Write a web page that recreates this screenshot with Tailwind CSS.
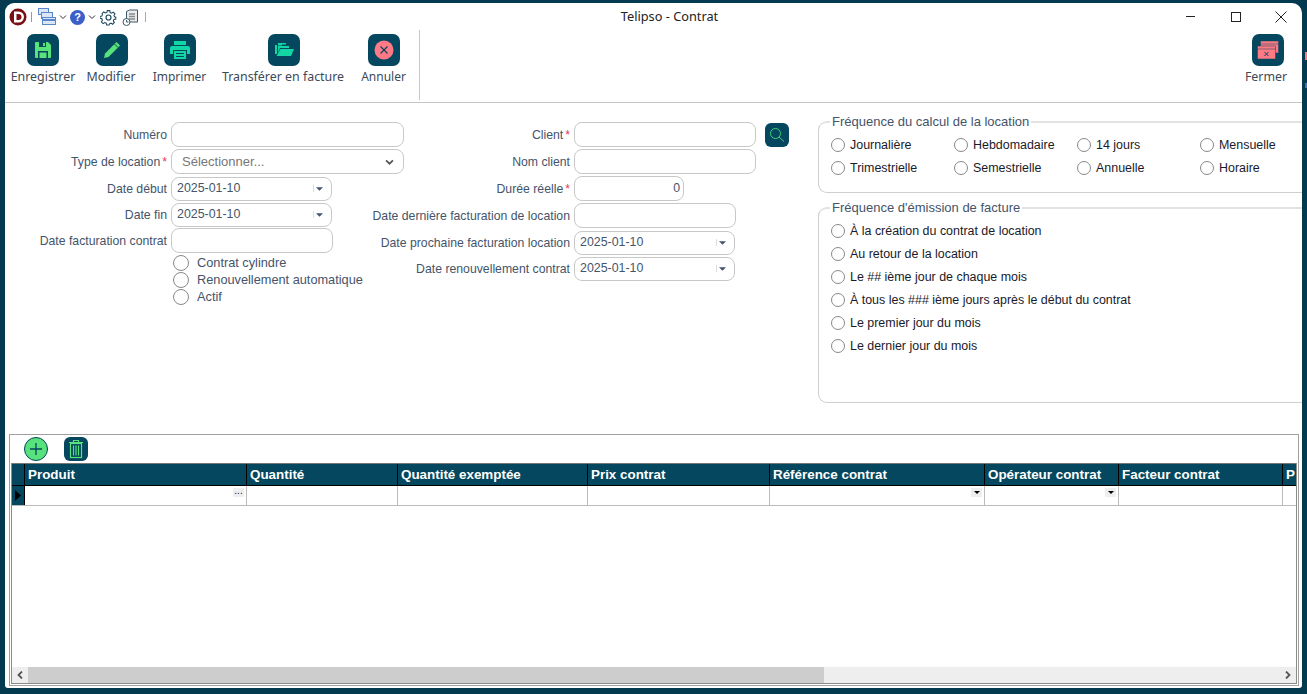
<!DOCTYPE html>
<html lang="fr">
<head>
  <meta charset="UTF-8" />
  <title>Telipso - Contrat</title>
  <script src="https://cdn.jsdelivr.net/npm/@tailwindcss/browser@4"></script>
</head>
<body class="bg-[#043a50] h-[694px] w-[1307px] overflow-hidden relative font-['Liberation_Sans',Arial,sans-serif] text-[12.25px] text-[#44546a]">
  <!-- window behind, just visible at the right edge -->
  <span class="absolute left-[1305px] top-[52px] w-[2px] h-[8px] bg-[#ff7a85]"></span>
  <span class="absolute left-[1305px] top-[83px] w-[2px] h-[5px] bg-[#4a6fb0]"></span>

  <div class="ml-[5px] mt-[3px] w-[1297px] h-[685px] bg-white rounded-tl-[9px] rounded-tr-[10px] rounded-bl-[3px] rounded-br-[3px] flex flex-col overflow-hidden">

    <!-- title bar -->
    <div class="h-[27px] shrink-0 flex items-center relative font-['Noto_Sans',sans-serif]">
      <div class="flex items-center ml-[4px] mt-[1px]">
        <svg class="w-[18px] h-[18px]" viewBox="0 0 18 18"><circle cx="9" cy="9" r="8.500" fill="#7a0f14"/><path d="M5 3.500h4.500a5.500 5.500 0 0 1 0 11H5z" fill="#fff"/><path d="M7.500 6h2a3 3 0 0 1 0 6h-2z" fill="#7a0f14"/></svg>
        <span class="w-px h-[10px] bg-[#999] ml-[4px]"></span>
        <svg class="w-[18px] h-[18px] ml-[6px]" viewBox="0 0 18 18" fill="#dbe6f7" stroke="#5a86cc"><rect x=".5" y=".5" width="10" height="6"/><rect x="3.500" y="4.500" width="11" height="6"/><rect x="4.500" y="9.500" width="13" height="7"/><path d="M4.500 12h13" stroke-width="2"/></svg>
        <svg class="w-[8px] h-[8px] ml-[3px]" viewBox="0 0 8 8" fill="none" stroke="#333"><path d="M1 2.500l3 3 3-3"/></svg>
        <span class="w-[15px] h-[15px] rounded-full bg-[#3a5fc8] ml-[3px] flex items-center justify-center text-white text-[11px] font-bold leading-none font-['Liberation_Sans',sans-serif]">?</span>
        <svg class="w-[8px] h-[8px] ml-[3px]" viewBox="0 0 8 8" fill="none" stroke="#333"><path d="M1 2.500l3 3 3-3"/></svg>
        <svg class="w-[17px] h-[17px] ml-[4px]" viewBox="0 0 24 24" fill="none" stroke="#1f4a5e" stroke-width="1.700"><circle cx="12" cy="12" r="3.500"/><path d="M10 2h4l.6 3 2.400 1 2.600-1.700 2.800 2.800L20.700 9.700l1 2.300 2 .4v3l-3 .6-1 2.400 1.700 2.600-2.800 2.800-2.600-1.700-2.400 1-.6 2h-4l-.6-3-2.400-1-2.600 1.700-2.800-2.800 1.700-2.600-1-2.400-3-.6v-3l3-.6 1-2.400L1.600 6.900l2.800-2.800L7 5.800l2.400-1z" transform="translate(12 12) scale(.88) translate(-12 -13)"/></svg>
        <svg class="w-[17px] h-[17px] ml-[5px]" viewBox="0 0 17 17" fill="#e8ecef" stroke="#3f5866"><path d="M4.500 2.500l3-1.500h8v12h-11z"/><path d="M7 5h6M7 7.500h6M7 10h6" stroke="#888" stroke-width="1.500"/><circle cx="4.500" cy="13" r="3.500" fill="#fff"/><path d="M4.500 11v2h2"/></svg>
        <span class="w-px h-[10px] bg-[#aaa] ml-[6px]"></span>
      </div>
      <div class="absolute left-[16px] w-[1297px] text-center text-[12.75px] text-[#222] pointer-events-none">Telipso - Contrat</div>
      <div class="ml-auto -mr-[1px] flex items-center text-[#222]">
        <span class="w-[45px] flex justify-center"><span class="w-[9px] h-px bg-[#222]"></span></span>
        <span class="w-[45px] flex justify-center"><span class="w-[10px] h-[10px] border border-[#222]"></span></span>
        <span class="w-[45px] flex justify-center"><svg class="w-[12px] h-[12px]" viewBox="0 0 12 12" stroke="#222"><path d="M.5.500l11 11M11.500.500l-11 11"/></svg></span>
      </div>
    </div>

    <!-- toolbar -->
    <div class="h-[73px] shrink-0 border-b border-[#c4c4c4] flex font-['Noto_Sans',sans-serif] text-[12.4px] text-[#3d4a58]">
      <div class="flex items-start pt-[4px] border-r border-[#c8c8c8] h-[70px] w-[415px]">
        <div class="w-[76px] flex flex-col items-center">
          <span class="w-[32px] h-[32px] rounded-[7px] bg-[#04475e] flex items-center justify-center">
            <svg class="w-[20px] h-[20px]" viewBox="0 0 20 20"><path d="M2 3a1 1 0 0 1 1-1h12l3 3v12a1 1 0 0 1-1 1H3a1 1 0 0 1-1-1z" fill="#57e27b"/><rect x="6" y="2" width="7" height="5" fill="#04475e"/><rect x="10" y="3" width="2" height="3" fill="#57e27b"/><rect x="5" y="11" width="10" height="7" fill="#04475e"/><rect x="6.500" y="12.500" width="7" height="5.500" fill="#57e27b"/></svg>
          </span>
          <span class="mt-[2px] leading-[17px]">Enregistrer</span>
        </div>
        <div class="w-[62px] flex flex-col items-center">
          <span class="w-[32px] h-[32px] rounded-[7px] bg-[#04475e] flex items-center justify-center">
            <svg class="w-[20px] h-[20px]" viewBox="0 0 20 20"><path d="M14.500 2l3.500 3.500L6.500 17 2 18l1-4.500z" fill="#57e27b"/><path d="M12.500 4l3.500 3.500" stroke="#04475e"/></svg>
          </span>
          <span class="mt-[2px] leading-[17px] -ml-[2px]">Modifier</span>
        </div>
        <div class="w-[74px] flex flex-col items-center">
          <span class="w-[32px] h-[32px] rounded-[7px] bg-[#04475e] flex items-center justify-center">
            <svg class="w-[22px] h-[22px]" viewBox="0 0 22 22" fill="#12d6a4"><rect x="5" y="2" width="12" height="4"/><path d="M1 9a2 2 0 0 1 2-2h16a2 2 0 0 1 2 2v6h-3v-4H4v4H1z"/><path d="M5 12h12v8H5z"/><path d="M7 14.500h8M7 17.500h8" stroke="#04475e"/></svg>
          </span>
          <span class="mt-[2px] leading-[17px] text-[12px] -ml-[1px]">Imprimer</span>
        </div>
        <div class="w-[134px] flex flex-col items-center">
          <span class="w-[32px] h-[32px] rounded-[7px] bg-[#04475e] flex items-center justify-center">
            <svg class="w-[20px] h-[20px]" viewBox="0 0 20 20" fill="#12d6a4"><path d="M1 5h2v9H1z"/><path d="M4 3h8v1.500H8v1H4z"/><path d="M4 6h11v2H6L4 13z"/><path d="M6.500 9H20l-3 7H2.500z"/></svg>
          </span>
          <span class="mt-[2px] leading-[17px] whitespace-nowrap -ml-[2px]">Transférer en facture</span>
        </div>
        <div class="w-[66px] flex flex-col items-center">
          <span class="w-[32px] h-[32px] rounded-[7px] bg-[#04475e] flex items-center justify-center">
            <svg class="w-[20px] h-[20px]" viewBox="0 0 20 20"><circle cx="10" cy="10" r="9.500" fill="#ff7a85"/><path d="M6.500 6.500l7 7M13.500 6.500l-7 7" stroke="#04475e" stroke-width="1.200"/></svg>
          </span>
          <span class="mt-[2px] leading-[17px] text-[12px] -ml-[1px]">Annuler</span>
        </div>
      </div>
      <div class="ml-auto mr-[16px] pt-[4px] w-[40px] flex flex-col items-center">
        <span class="ml-[4px] w-[32px] h-[32px] rounded-[7px] bg-[#04475e] flex items-center justify-center">
          <svg class="w-[22px] h-[20px]" viewBox="0 0 22 20" fill="#ff7a85" stroke="#04475e" stroke-width=".5"><rect x="3.500" y="1" width="18" height="12" /><rect x="0.500" y="6" width="18" height="13"/><path d="M.5 9h18M3.500 4h18" /><path d="M7.500 12l4 4M11.500 12l-4 4" stroke-width="1"/></svg>
        </span>
        <span class="mt-[2px] leading-[17px]">Fermer</span>
      </div>
    </div>

    <!-- form -->
    <div class="h-[331px] shrink-0 relative flex pt-[19px]">
      <!-- left column -->
      <div class="w-[399px] shrink-0 flex flex-col gap-[2px]">
        <div class="flex items-center h-[25px]"><label class="w-[162px] pt-[1px] flex justify-end whitespace-nowrap">Numéro</label><input class="ml-[4px] w-[233px] h-[25px] border border-[#c8c8c8] rounded-[8px]" /></div>
        <div class="flex items-center h-[25px]"><label class="w-[162px] pt-[1px] flex justify-end whitespace-nowrap">Type de location<span class="text-[#e0405a] ml-[2px]">*</span></label>
          <div class="ml-[4px] w-[233px] h-[25px] border border-[#c8c8c8] rounded-[8px] flex items-center justify-between pl-[10px] pr-[9px] text-[13px] text-[#777]">Sélectionner...
            <svg class="w-[9px] h-[6px]" viewBox="0 0 10 7" fill="none" stroke="#555" stroke-width="2"><path d="M1 1.500l4 4 4-4"/></svg></div></div>
        <div class="flex items-center h-[25px] -mb-[1px]"><label class="w-[162px] pt-[1px] flex justify-end whitespace-nowrap">Date début</label>
          <div class="ml-[4px] w-[161px] h-[24px] border border-[#c8c8c8] rounded-[8px] flex items-center justify-between pl-[5px] pr-[8px] text-[12.4px]"><span>2025-01-10</span><span class="flex items-center gap-[2px]"><span class="w-px h-[7px] bg-[#ddd]"></span><svg class="w-[7px] h-[4px]" viewBox="0 0 8 4" fill="#44546a"><path d="M0 0h8L4 4z"/></svg></span></div></div>
        <div class="flex items-center h-[25px] -mb-[1px]"><label class="w-[162px] pt-[1px] flex justify-end whitespace-nowrap">Date fin</label>
          <div class="ml-[4px] w-[161px] h-[24px] border border-[#c8c8c8] rounded-[8px] flex items-center justify-between pl-[5px] pr-[8px] text-[12.4px]"><span>2025-01-10</span><span class="flex items-center gap-[2px]"><span class="w-px h-[7px] bg-[#ddd]"></span><svg class="w-[7px] h-[4px]" viewBox="0 0 8 4" fill="#44546a"><path d="M0 0h8L4 4z"/></svg></span></div></div>
        <div class="flex items-center h-[25px]"><label class="w-[162px] pt-[1px] flex justify-end whitespace-nowrap">Date facturation contrat</label><input class="ml-[4px] w-[162px] h-[25px] border border-[#c8c8c8] rounded-[8px]" /></div>
        <div class="ml-[168px] -mt-[1px] flex flex-col text-[12.75px]">
          <div class="flex items-center h-[17px] gap-[8px] whitespace-nowrap"><span class="w-[16px] h-[16px] rounded-full border border-[#888]"></span>Contrat cylindre</div>
          <div class="flex items-center h-[17px] gap-[8px] whitespace-nowrap"><span class="w-[16px] h-[16px] rounded-full border border-[#888]"></span>Renouvellement automatique</div>
          <div class="flex items-center h-[17px] gap-[8px] whitespace-nowrap"><span class="w-[16px] h-[16px] rounded-full border border-[#888]"></span>Actif</div>
        </div>
      </div>

      <!-- middle column -->
      <div class="w-[414px] shrink-0 flex flex-col gap-[2px]">
        <div class="flex items-center h-[25px]"><label class="w-[166px] pt-[1px] flex justify-end whitespace-nowrap">Client<span class="text-[#e0405a] ml-[2px]">*</span></label><input class="ml-[4px] w-[182px] h-[25px] border border-[#c8c8c8] rounded-[8px]" />
          <span class="ml-[9px] w-[24px] h-[24px] rounded-[6px] bg-[#04475e] flex items-center justify-center"><svg class="w-[16px] h-[16px]" viewBox="0 0 16 16" fill="none" stroke="#3ecf7a"><circle cx="6.500" cy="6.500" r="5"/><path d="M10 10l5 4.500"/></svg></span></div>
        <div class="flex items-center h-[25px]"><label class="w-[166px] pt-[1px] flex justify-end whitespace-nowrap">Nom client</label><input class="ml-[4px] w-[182px] h-[25px] border border-[#c8c8c8] rounded-[8px]" /></div>
        <div class="flex items-center h-[25px]"><label class="w-[166px] pt-[1px] flex justify-end whitespace-nowrap">Durée réelle<span class="text-[#e0405a] ml-[2px]">*</span></label><input value="0" class="ml-[4px] w-[110px] h-[25px] border border-[#c8c8c8] rounded-[8px] text-right pr-[3px] pb-[2px]" /></div>
        <div class="flex items-center h-[25px]"><label class="w-[166px] pt-[1px] flex justify-end whitespace-nowrap">Date dernière facturation de location</label><input class="ml-[4px] w-[162px] h-[25px] border border-[#c8c8c8] rounded-[8px]" /></div>
        <div class="flex items-center h-[25px] -mb-[1px]"><label class="w-[166px] pt-[1px] flex justify-end whitespace-nowrap">Date prochaine facturation location</label>
          <div class="ml-[4px] w-[161px] h-[24px] border border-[#c8c8c8] rounded-[8px] flex items-center justify-between pl-[5px] pr-[8px] text-[12.4px]"><span>2025-01-10</span><span class="flex items-center gap-[2px]"><span class="w-px h-[7px] bg-[#ddd]"></span><svg class="w-[7px] h-[4px]" viewBox="0 0 8 4" fill="#44546a"><path d="M0 0h8L4 4z"/></svg></span></div></div>
        <div class="flex items-center h-[25px]"><label class="w-[166px] pt-[1px] flex justify-end whitespace-nowrap">Date renouvellement contrat</label>
          <div class="ml-[4px] w-[161px] h-[24px] border border-[#c8c8c8] rounded-[8px] flex items-center justify-between pl-[5px] pr-[8px] text-[12.4px]"><span>2025-01-10</span><span class="flex items-center gap-[2px]"><span class="w-px h-[7px] bg-[#ddd]"></span><svg class="w-[7px] h-[4px]" viewBox="0 0 8 4" fill="#44546a"><path d="M0 0h8L4 4z"/></svg></span></div></div>
      </div>

      <!-- right column -->
      <div class="w-[510px] shrink-0 -mt-[7px]">
        <fieldset class="h-[78px] border border-[#cfcfcf] border-t-2 border-t-[#e2e2e2] rounded-[9px] pl-[12px]">
          <legend class="px-[2px] -ml-[1px] text-[13px] leading-[14px]">Fréquence du calcul de la location</legend>
          <div class="grid grid-cols-[123px_123px_123px_123px] gap-y-[9px] text-[12.45px] text-[#1a1a2a] mt-[9px]">
            <div class="flex items-center h-[14px] gap-[5px]"><span class="w-[14px] h-[14px] rounded-full border border-[#888]"></span>Journalière</div>
            <div class="flex items-center h-[14px] gap-[5px]"><span class="w-[14px] h-[14px] rounded-full border border-[#888]"></span>Hebdomadaire</div>
            <div class="flex items-center h-[14px] gap-[5px]"><span class="w-[14px] h-[14px] rounded-full border border-[#888]"></span>14 jours</div>
            <div class="flex items-center h-[14px] gap-[5px]"><span class="w-[14px] h-[14px] rounded-full border border-[#888]"></span>Mensuelle</div>
            <div class="flex items-center h-[14px] gap-[5px]"><span class="w-[14px] h-[14px] rounded-full border border-[#888]"></span>Trimestrielle</div>
            <div class="flex items-center h-[14px] gap-[5px]"><span class="w-[14px] h-[14px] rounded-full border border-[#888]"></span>Semestrielle</div>
            <div class="flex items-center h-[14px] gap-[5px]"><span class="w-[14px] h-[14px] rounded-full border border-[#888]"></span>Annuelle</div>
            <div class="flex items-center h-[14px] gap-[5px]"><span class="w-[14px] h-[14px] rounded-full border border-[#888]"></span>Horaire</div>
          </div>
        </fieldset>
        <fieldset class="mt-[8px] h-[202px] border border-[#cfcfcf] border-t-2 border-t-[#e2e2e2] rounded-[9px] pl-[12px]">
          <legend class="px-[2px] -ml-[1px] text-[13px] leading-[14px]">Fréquence d'émission de facture</legend>
          <div class="flex flex-col gap-[9px] text-[12.45px] text-[#1a1a2a] mt-[9px]">
            <div class="flex items-center h-[14px] gap-[5px]"><span class="w-[14px] h-[14px] rounded-full border border-[#888]"></span>À la création du contrat de location</div>
            <div class="flex items-center h-[14px] gap-[5px]"><span class="w-[14px] h-[14px] rounded-full border border-[#888]"></span>Au retour de la location</div>
            <div class="flex items-center h-[14px] gap-[5px]"><span class="w-[14px] h-[14px] rounded-full border border-[#888]"></span>Le ## ième jour de chaque mois</div>
            <div class="flex items-center h-[14px] gap-[5px]"><span class="w-[14px] h-[14px] rounded-full border border-[#888]"></span>À tous les ### ième jours après le début du contrat</div>
            <div class="flex items-center h-[14px] gap-[5px]"><span class="w-[14px] h-[14px] rounded-full border border-[#888]"></span>Le premier jour du mois</div>
            <div class="flex items-center h-[14px] gap-[5px]"><span class="w-[14px] h-[14px] rounded-full border border-[#888]"></span>Le dernier jour du mois</div>
          </div>
        </fieldset>
      </div>
    </div>

    <!-- grid panel -->
    <div class="ml-[4px] w-[1290px] h-[252px] border border-[#a0a0a0] pb-[1px] flex flex-col">
      <div class="h-[28px] shrink-0 flex items-center pl-[14px] gap-[16px]">
        <span class="w-[24px] h-[24px] rounded-full bg-[#57e27b] border border-[#04475e] flex items-center justify-center"><svg class="w-[12px] h-[12px]" viewBox="0 0 12 12" stroke="#04475e" stroke-width="1.300"><path d="M6 0v12M0 6h12"/></svg></span>
        <span class="w-[24px] h-[24px] rounded-[6px] bg-[#04475e] flex items-center justify-center"><svg class="w-[16px] h-[20px]" viewBox="0 0 16 20" fill="none" stroke="#57e27b" stroke-width="1.200"><path d="M1 3.500h14M5.500 3.500v-2h5v2"/><rect x="2.500" y="4.500" width="11" height="14"/><path d="M5.500 6.500v10M8 6.500v10M10.500 6.500v10"/></svg></span>
      </div>
      <div class="mx-[1px] flex-1 border-x border-b border-[#8a8a8a] flex flex-col overflow-hidden">
        <div class="h-[23px] shrink-0 flex bg-[#04475e] border-t border-[#777] border-b-[1px] border-b-black text-white font-bold text-[13.4px] leading-[21px] whitespace-nowrap">
          <span class="w-[13px] shrink-0 border-r border-black"></span>
          <span class="w-[222px] shrink-0 border-r border-black pl-[3px]">Produit</span>
          <span class="w-[151px] shrink-0 border-r border-black pl-[3px]">Quantité</span>
          <span class="w-[190px] shrink-0 border-r border-black pl-[3px]">Quantité exemptée</span>
          <span class="w-[182px] shrink-0 border-r border-black pl-[3px]">Prix contrat</span>
          <span class="w-[215px] shrink-0 border-r border-black pl-[3px]">Référence contrat</span>
          <span class="w-[134px] shrink-0 border-r border-black pl-[3px]">Opérateur contrat</span>
          <span class="w-[164px] shrink-0 border-r border-black pl-[3px]">Facteur contrat</span>
          <span class="flex-1 min-w-0 pl-[3px] overflow-hidden">P</span>
        </div>
        <div class="h-[20px] shrink-0 flex border-b border-[#bbb]">
          <span class="w-[13px] shrink-0 bg-[#04475e] border-r border-black flex items-center justify-center"><svg class="w-[6px] h-[11px]" viewBox="0 0 6 11" fill="#000"><path d="M0 0l6 5.500L0 11z"/></svg></span>
          <span class="w-[222px] shrink-0 border-r border-[#bbb] flex justify-end pr-[2px] pt-[2px]"><span class="w-[11px] h-[9px] bg-[#eee] text-[10px] leading-[5px] text-center text-[#222]">...</span></span>
          <span class="w-[151px] shrink-0 border-r border-[#bbb]"></span>
          <span class="w-[190px] shrink-0 border-r border-[#bbb]"></span>
          <span class="w-[182px] shrink-0 border-r border-[#bbb]"></span>
          <span class="w-[215px] shrink-0 border-r border-[#bbb] flex justify-end pr-[2px] pt-[2px]"><span class="w-[11px] h-[9px] bg-[#eee] flex items-center justify-center"><svg class="w-[6px] h-[3px]" viewBox="0 0 6 3"><path d="M0 0h6L3 3z"/></svg></span></span>
          <span class="w-[134px] shrink-0 border-r border-[#bbb] flex justify-end pr-[2px] pt-[2px]"><span class="w-[11px] h-[9px] bg-[#eee] flex items-center justify-center"><svg class="w-[6px] h-[3px]" viewBox="0 0 6 3"><path d="M0 0h6L3 3z"/></svg></span></span>
          <span class="w-[164px] shrink-0 border-r border-[#bbb]"></span>
        </div>
        <div class="flex-1"></div>
        <div class="h-[16px] shrink-0 bg-[#eeeeee] flex items-stretch relative">
          <span class="w-[16px] shrink-0 flex items-center justify-center"><svg class="w-[6px] h-[8px]" viewBox="0 0 6 8" fill="none" stroke="#555" stroke-width="1.800"><path d="M5 .5L1.500 4 5 7.500"/></svg></span>
          <span class="w-[796px] bg-[#cdcdcd]"></span>
          <span class="ml-auto w-[17px] flex items-center justify-center"><svg class="w-[6px] h-[8px]" viewBox="0 0 6 8" fill="none" stroke="#555" stroke-width="1.800"><path d="M1 .5L4.500 4 1 7.500"/></svg></span>
        </div>
      </div>
    </div>
  </div>
</body>
</html>
